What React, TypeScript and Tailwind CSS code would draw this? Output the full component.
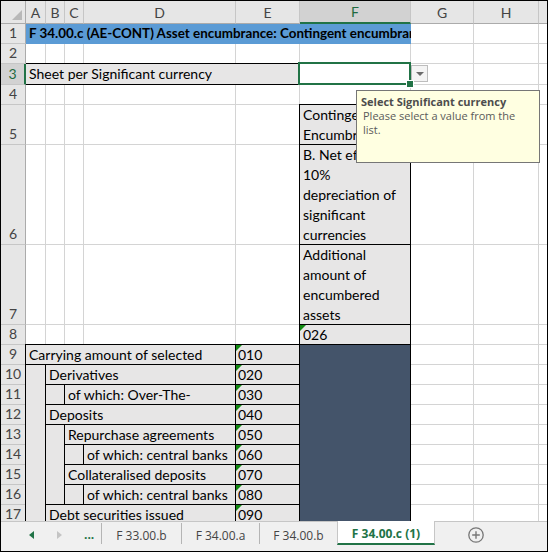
import React from 'react';

const cols = ['A', 'B', 'C', 'D', 'E', 'F', 'G', 'H'];
const rowNums = Array.from({ length: 17 }, (_, i) => i + 1);

const GRID_COLS = 'grid grid-cols-[25px_20px_19px_19px_152px_64px_111px_63px_65px_8px] grid-rows-[23px_20px_20px_21px_20px_40px_100px_80px_20px_repeat(9,20px)]';

function Tri() {
  return (
    <span className="absolute left-0 top-0 w-0 h-0 border-t-[6px] border-t-[#128a12] border-r-[6px] border-r-transparent" />
  );
}

function Code({ row, code }: { row: string; code: string }) {
  return (
    <div className={`${row} col-start-6 relative -ml-px -mt-px border border-black bg-[#e7e6e6] pl-[2px] leading-[19px] overflow-hidden whitespace-nowrap`}>
      <Tri />
      {code}
    </div>
  );
}

function Background() {
  return (
    <div className={`col-start-1 row-start-1 ${GRID_COLS}`}>
      <div className="relative bg-[#e6e6e6] border-r border-b border-[#ababab]">
        <span className="absolute right-[3px] bottom-[3px] w-0 h-0 border-b-[10px] border-b-[#b8b8b8] border-l-[10px] border-l-transparent" />
      </div>
      {cols.map((c) =>
        c === 'F' ? (
          <div key={c} className="bg-[#d2d2d2] border-r border-r-[#c6c6c6] border-b-2 border-b-[#217346] flex items-center justify-center text-[#1f6b40]">
            {c}
          </div>
        ) : (
          <div key={c} className="bg-[#e6e6e6] border-r border-r-[#c6c6c6] border-b border-b-[#ababab] flex items-center justify-center text-[#444]">
            {c}
          </div>
        )
      )}
      <div className="bg-[#e6e6e6] border-b border-b-[#ababab]" />
      {rowNums.map((r) => (
        <React.Fragment key={r}>
          {r === 3 ? (
            <div className="bg-[#d2d2d2] border-r-2 border-r-[#217346] border-b border-b-[#c6c6c6] flex items-end justify-center leading-[20px] text-[#1f6b40]">
              {r}
            </div>
          ) : (
            <div className="bg-[#e6e6e6] border-r border-r-[#ababab] border-b border-b-[#c6c6c6] flex items-end justify-center leading-[20px] text-[#444]">
              {r}
            </div>
          )}
          {cols.map((c) => (
            <div key={c} className="border-r border-b border-[#d4d4d4]" />
          ))}
          <div className="border-b border-[#d4d4d4]" />
        </React.Fragment>
      ))}
    </div>
  );
}

function Foreground() {
  const box = '-ml-px -mt-px border border-black bg-[#e7e6e6] pl-[3px] leading-[19px] overflow-hidden whitespace-nowrap';
  const spacer = '-ml-px border-x border-black bg-[#e7e6e6]';
  return (
    <div className={`col-start-1 row-start-1 ${GRID_COLS}`}>
      {/* Row 1 title */}
      <div className="col-start-2 col-span-6 row-start-2 bg-[#5b9bd5] font-bold text-[13.4px] pl-[3px] leading-[19px] overflow-hidden whitespace-nowrap">
        F 34.00.c (AE-CONT) Asset encumbrance: Contingent encumbrance
      </div>

      {/* Row 3 */}
      <div className="col-start-2 col-span-5 row-start-4 -mt-px border-t border-r border-b border-black bg-[#e7e6e6] pl-[3px] leading-[20px] overflow-hidden whitespace-nowrap">
        Sheet per Significant currency
      </div>
      <div className="col-start-7 row-start-4 relative -ml-[2px] -mt-[2px] border-2 border-[#217346]">
        <span className="absolute -right-[4px] -bottom-[4px] w-[6px] h-[6px] bg-[#217346] outline outline-1 outline-white" />
      </div>
      <div className="col-start-8 row-start-4 flex items-start">
        <div className="mt-px w-[17px] h-[17px] border border-[#bdbdbd] bg-[#f4f4f4] flex items-center justify-center">
          <span className="w-0 h-0 border-t-[4px] border-t-[#6b6b6b] border-x-[4px] border-x-transparent" />
        </div>
      </div>

      {/* F5..F8 headers */}
      <div className={`col-start-7 row-start-6 ${box} leading-[20px]`}>
        <div>Contingent</div>
        <div>Encumbrance</div>
      </div>
      <div className={`col-start-7 row-start-7 ${box} leading-[20px]`}>
        <div>B. Net effect of</div>
        <div>10%</div>
        <div>depreciation of</div>
        <div>significant</div>
        <div>currencies</div>
      </div>
      <div className={`col-start-7 row-start-8 ${box} leading-[20px]`}>
        <div>Additional</div>
        <div>amount of</div>
        <div>encumbered</div>
        <div>assets</div>
      </div>
      <div className={`col-start-7 row-start-9 relative ${box}`}>
        <Tri />
        026
      </div>

      {/* Row labels */}
      <div className={`col-start-2 col-span-4 row-start-10 ${box}`}>Carrying amount of selected</div>
      <div className={`col-start-2 row-start-11 row-span-8 ${spacer}`} />
      <div className={`col-start-3 col-span-3 row-start-11 ${box}`}>Derivatives</div>
      <div className={`col-start-3 row-start-12 ${spacer}`} />
      <div className={`col-start-4 col-span-2 row-start-12 ${box}`}>of which: Over-The-</div>
      <div className={`col-start-3 col-span-3 row-start-13 ${box}`}>Deposits</div>
      <div className={`col-start-3 row-start-14 row-span-4 ${spacer}`} />
      <div className={`col-start-4 col-span-2 row-start-14 ${box}`}>Repurchase agreements</div>
      <div className={`col-start-4 row-start-15 ${spacer}`} />
      <div className={`col-start-5 row-start-15 ${box}`}>of which: central banks</div>
      <div className={`col-start-4 col-span-2 row-start-16 ${box}`}>Collateralised deposits</div>
      <div className={`col-start-4 row-start-17 ${spacer}`} />
      <div className={`col-start-5 row-start-17 ${box}`}>of which: central banks</div>
      <div className={`col-start-3 col-span-3 row-start-18 ${box}`}>Debt securities issued</div>

      <Code row="row-start-10" code="010" />
      <Code row="row-start-11" code="020" />
      <Code row="row-start-12" code="030" />
      <Code row="row-start-13" code="040" />
      <Code row="row-start-14" code="050" />
      <Code row="row-start-15" code="060" />
      <Code row="row-start-16" code="070" />
      <Code row="row-start-17" code="080" />
      <Code row="row-start-18" code="090" />

      <div className="col-start-7 row-start-10 row-span-9 -ml-px -mt-px border border-black bg-[#44546a]" />
    </div>
  );
}

function TabBar() {
  return (
    <div className="h-[30px] flex items-start bg-[#f0f0f0] border-t border-[#c6c6c6] font-['Open_Sans',sans-serif] text-[12px] text-[#444]">
      <div className="w-[100px] h-[25px] flex items-center pt-[1px]">
        <svg className="ml-[28px]" width="5" height="8" viewBox="0 0 5 8">
          <polygon points="5,0 5,8 0,4" fill="#217346" />
        </svg>
        <svg className="ml-[23px]" width="5" height="8" viewBox="0 0 5 8">
          <polygon points="0,0 0,8 5,4" fill="#c4c4c4" />
        </svg>
        <span className="ml-[22px] font-bold text-[#217346] leading-none pb-[1px]">...</span>
      </div>
      <div className="w-px h-[21px] mt-[1px] bg-[#b5b5b5]" />
      <div className="w-[79px] h-[24px] flex items-center justify-center pt-[4px]">F 33.00.b</div>
      <div className="w-px h-[21px] mt-[1px] bg-[#b5b5b5]" />
      <div className="w-[77px] h-[24px] flex items-center justify-center pt-[4px]">F 34.00.a</div>
      <div className="w-px h-[21px] mt-[1px] bg-[#b5b5b5]" />
      <div className="w-[77px] h-[24px] flex items-center justify-center pt-[4px]">F 34.00.b</div>
      <div className="w-[98px] h-[24px] -mt-px bg-white border-x border-[#c6c6c6] border-b-2 border-b-[#217346] flex items-center justify-center pt-[4px] font-bold text-[#217346]">
        F 34.00.c (1)
      </div>
      <div className="h-[25px] flex items-center pt-[1px]">
        <svg className="ml-[33px]" width="16" height="16" viewBox="0 0 16 16">
          <circle cx="8" cy="8" r="7.2" fill="none" stroke="#777" strokeWidth="1.3" />
          <path d="M8 4.2v7.6M4.2 8h7.6" stroke="#777" strokeWidth="1.4" />
        </svg>
      </div>
    </div>
  );
}

function Tooltip() {
  return (
    <div className="absolute left-[355px] top-[89px] w-[184px] h-[73px] bg-[#ffffe1] border border-[#767676] font-['Open_Sans',sans-serif] text-[11px] leading-[14px] pl-[4px] pt-[4px] text-[#5a5a5a]">
      <div className="font-bold text-[#4d4d4d] whitespace-nowrap">Select Significant currency</div>
      <div className="pl-[2px] whitespace-nowrap">
        Please select a value from the
        <br />
        list.
      </div>
    </div>
  );
}

export default function App() {
  return (
    <div className="w-[548px] h-[553px] bg-white">
      <div className="relative w-[548px] h-[552px] border border-black flex flex-col overflow-hidden bg-white font-['Lato',sans-serif] text-[14px] text-black">
        <div className="h-[520px] overflow-hidden">
          <div className="grid">
            <Background />
            <Foreground />
          </div>
        </div>
        <TabBar />
        <Tooltip />
      </div>
    </div>
  );
}
